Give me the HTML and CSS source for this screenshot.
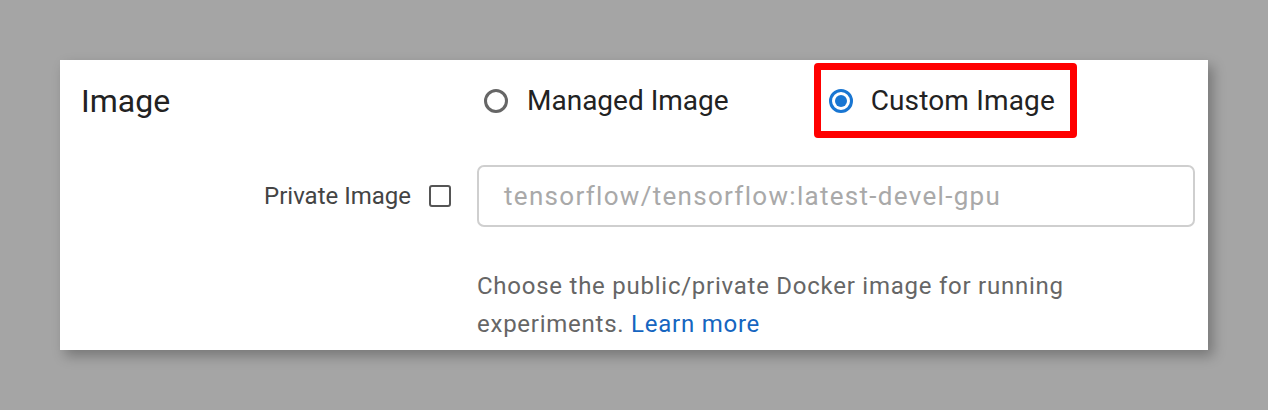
FILE: index.html
```html
<!DOCTYPE html>
<html lang="en">
<head>
<meta charset="utf-8">
<title>Image</title>
<link rel="stylesheet" href="styles.css">
</head>
<body>
  <section class="card">
    <div class="row row-top">
      <div class="title">Image</div>
      <div class="radios">
        <label class="radio">
          <span class="radio-ring"></span>
          <span class="radio-text">Managed Image</span>
        </label>
        <label class="radio radio-checked highlight">
          <span class="radio-ring"><span class="radio-dot"></span></span>
          <span class="radio-text">Custom Image</span>
        </label>
      </div>
    </div>
    <div class="row row-input">
      <div class="private">
        <span class="private-text">Private Image</span>
        <span class="checkbox"></span>
      </div>
      <div class="input">tensorflow/tensorflow:latest-devel-gpu</div>
    </div>
    <div class="row row-help">
      <div></div>
      <p class="help"><span>Choose the public/private Docker image for running experiments.</span> <a class="link" href="#">Learn more</a></p>
    </div>
  </section>
</body>
</html>
```

FILE: styles.css
```css
* { box-sizing: border-box; }

html, body {
  margin: 0;
  padding: 0;
  background: #a5a5a5;
  font-family: Roboto, "Liberation Sans", Arial, sans-serif;
}

body {
  padding: 60px 60px 0 60px;
  height: 410px;
  overflow: hidden;
}

.card {
  width: 1148px;
  height: 290px;
  background: #ffffff;
  box-shadow: 5px 6px 12px rgba(0, 0, 0, 0.28);
  padding: 0 13px 0 21px;
}

.row {
  display: grid;
  grid-template-columns: 396px 1fr;
  align-items: center;
}

.row-top {
  padding-top: 3px;
  height: 78px;
}

.title {
  font-size: 32px;
  color: #222;
}

.radios {
  display: flex;
  align-items: center;
  padding-left: 7px;
}

.radio {
  display: flex;
  align-items: center;
  gap: 19px;
  font-size: 28px;
  color: #222;
}

.radio-ring {
  width: 24px;
  height: 24px;
  border: 3px solid #666;
  border-radius: 50%;
  display: flex;
  align-items: center;
  justify-content: center;
  flex: none;
}

.radio-checked .radio-ring {
  border-color: #1976d2;
}

.radio-dot {
  width: 12px;
  height: 12px;
  border-radius: 50%;
  background: #1976d2;
}

.highlight {
  margin-left: 85px;
  height: 75px;
  border: 7px solid #ff0000;
  border-radius: 4px;
  padding: 0 15px 0 8px;
  gap: 18px;
}

.highlight .radio-text {
  letter-spacing: 0.15px;
}

.row-input {
  margin-top: 27px;
}

.private {
  display: flex;
  align-items: center;
  justify-content: flex-end;
  gap: 18px;
  padding-right: 26px;
}

.private-text {
  font-size: 24px;
  color: #444;
}

.checkbox {
  width: 22px;
  height: 22px;
  border: 2px solid #555;
  border-radius: 3px;
}

.input {
  height: 62px;
  border: 2px solid #cfcfcf;
  border-radius: 7px;
  display: flex;
  align-items: center;
  padding-left: 25px;
  font-size: 26px;
  letter-spacing: 1.3px;
  color: #a9a9a9;
}

.row-help {
  align-items: start;
  margin-top: 40px;
}

.help {
  margin: 0;
  font-size: 24px;
  line-height: 38px;
  letter-spacing: 0.75px;
  color: #666;
  width: 640px;
}

.link {
  color: #1565c0;
  text-decoration: none;
}
```
